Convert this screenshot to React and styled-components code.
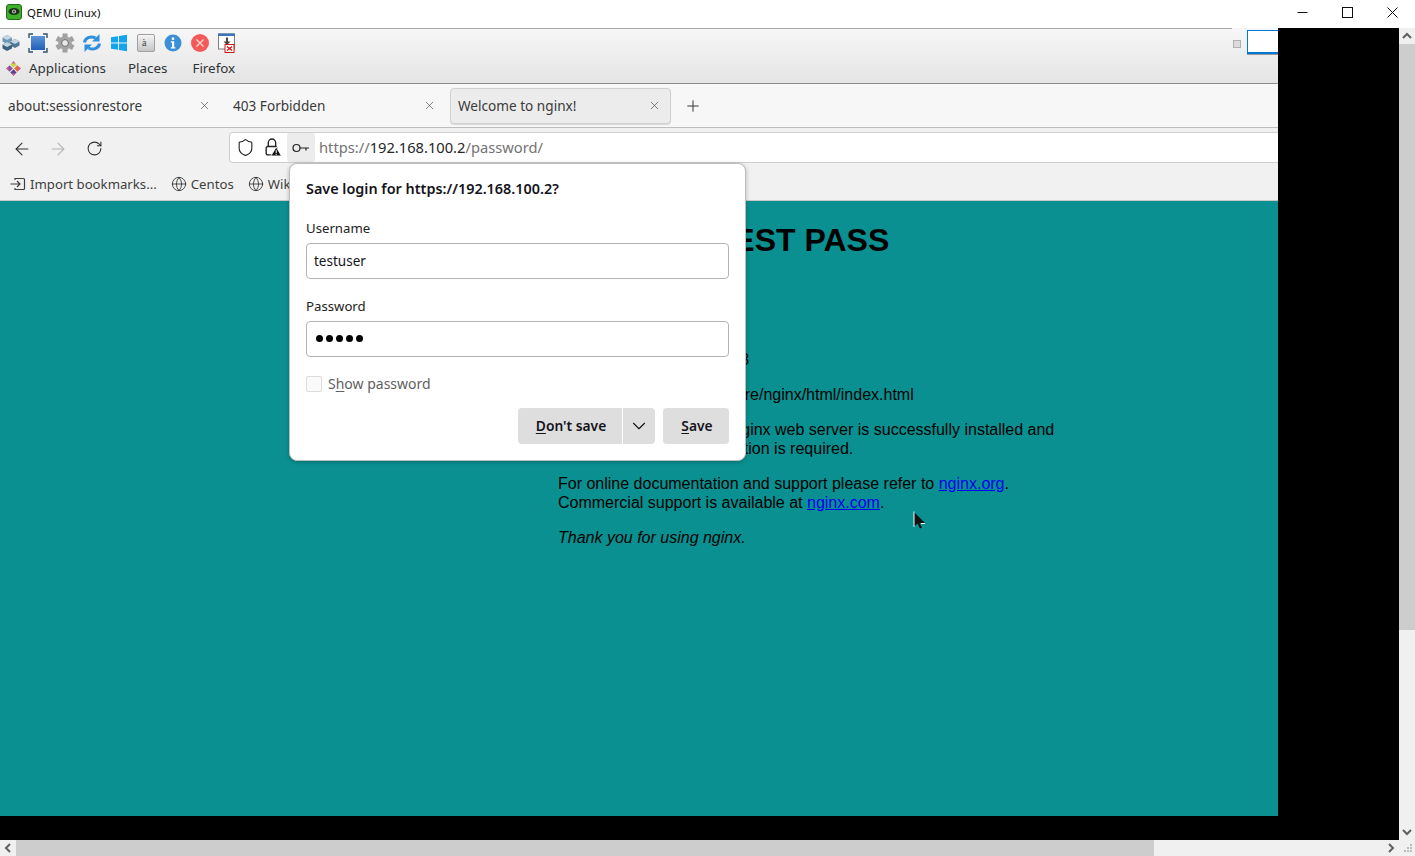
import React from "react";
import styled, { createGlobalStyle } from "styled-components";
import { ArrowLeft, ArrowRight, ChevronDown, Globe, Plus, RotateCw, Shield, X } from "lucide-react";

const GlobalStyle = createGlobalStyle`
  html, body {
    margin: 0;
    padding: 0;
    background: #000;
    overflow: hidden;
  }
  * { box-sizing: border-box; }
`;

const Screen = styled.div`
  width: 1415px;
  height: 856px;
  display: flex;
  flex-direction: column;
  overflow: hidden;
  background: #000;
  font-family: "Noto Sans", "Open Sans", sans-serif;
`;

const TitleBar = styled.div`
  height: 28px;
  flex: none;
  display: flex;
  align-items: center;
  background: #fff;
  padding: 0 0 4px 6px;
  font-size: 11.5px;
  color: #111;
`;

const TitleText = styled.span`
  margin-left: 5px;
  flex: 1;
`;

const WinButton = styled.div`
  width: 45px;
  height: 24px;
  display: flex;
  align-items: center;
  justify-content: center;
`;

const Middle = styled.div`
  flex: 1;
  display: flex;
  min-height: 0;
`;

const Viewport = styled.div`
  flex: 1;
  display: flex;
  flex-direction: column;
  background: #000;
`;

const Guest = styled.div`
  position: relative;
  width: 1278px;
  height: 788px;
  display: flex;
  flex-direction: column;
  overflow: hidden;
  background: #fff;
`;

const DesktopBar = styled.div`
  height: 56px;
  flex: none;
  position: relative;
  background: linear-gradient(#f7f7f7, #e4e4e4);
  border-bottom: 1px solid #8c8c8c;
`;

const TaskTray = styled.div`
  position: absolute;
  top: 2px;
  right: 0;
  display: flex;
  align-items: center;
  gap: 6px;
`;

const TrayDot = styled.div`
  width: 8px;
  height: 8px;
  margin-top: 4px;
  background: #dcdcdc;
  border: 1px solid #b0b0b0;
`;

const TrayInput = styled.div`
  width: 31px;
  height: 24px;
  background: #fff;
  border: 1px solid #0078d7;
  border-right: none;
  border-bottom: 2px solid #0078d7;
  box-shadow: 0 1px 0 #9a9a9a;
`;

const TopRule = styled.div`
  height: 1px;
  width: 1232px;
  background: #a8a8a8;
`;

const IconRow = styled.div`
  display: flex;
  gap: 7px;
  padding: 4px 0 0 1px;
  height: 26px;
`;

const MenuRow = styled.div`
  display: flex;
  align-items: center;
  height: 26px;
  padding-left: 6px;
  font-size: 13.4px;
  color: #2e3436;
`;

const MenuItem = styled.span`
  margin-left: ${(p) => p.$left}px;
`;

const TabBar = styled.div`
  height: 44px;
  flex: none;
  display: flex;
  gap: 4px;
  padding-top: 4px;
  background: #f7f7f7;
  border-bottom: 1px solid #bdbdbd;
`;

const Tab = styled.div`
  width: 221px;
  height: 36px;
  display: flex;
  align-items: center;
  justify-content: space-between;
  padding: 0 9px 1px 7px;
  font-size: 13.6px;
  color: #3a3a3a;
  border-radius: 4px;
  background: ${(p) => (p.$active ? "#ececec" : "transparent")};
  border: 1px solid ${(p) => (p.$active ? "#d0d0d0" : "transparent")};
  box-shadow: ${(p) => (p.$active ? "0 1px 1px rgba(0,0,0,0.12)" : "none")};
`;

const NewTab = styled.div`
  width: 36px;
  height: 36px;
  display: flex;
  align-items: center;
  justify-content: center;
  color: #333;
`;

const NavBar = styled.div`
  height: 37px;
  flex: none;
  display: flex;
  align-items: center;
  background: #f1f1f1;
  padding: 2px 0 0 4px;
`;

const NavButton = styled.div`
  width: 36px;
  height: 30px;
  padding-top: 2px;
  display: flex;
  align-items: center;
  justify-content: center;
  color: ${(p) => (p.$muted ? "#b4b4b4" : "#333")};
`;

const UrlBar = styled.div`
  margin-left: 117px;
  flex: 1;
  height: 31px;
  display: flex;
  align-items: center;
  background: #fff;
  border: 1px solid #cfcfcf;
  border-right: none;
  border-radius: 4px 0 0 4px;
  padding-left: 2px;
  font-size: 14.7px;
  color: #737373;
`;

const UrlIcon = styled.div`
  width: 27px;
  height: 29px;
  flex: none;
  display: flex;
  align-items: center;
  justify-content: center;
  color: #222;
`;

const KeyButton = styled(UrlIcon)`
  width: 28px;
  margin-left: 1px;
  background: #ececec;
  border-radius: 3px;
`;

const UrlText = styled.span`
  margin: -2px 0 0 4px;
`;

const UrlHost = styled.span`
  color: #262626;
`;

const BookmarkBar = styled.div`
  height: 36px;
  flex: none;
  display: flex;
  align-items: center;
  background: #f1f1f1;
  border-bottom: 1px solid #c8c8c8;
  padding: 2px 0 0 10px;
  font-size: 13.2px;
  color: #3f3f3f;
`;

const Bookmark = styled.div`
  display: flex;
  align-items: center;
  gap: 4px;
  margin-right: 14px;
`;

const Page = styled.div`
  flex: 1;
  background: #0a9090;
  color: #000;
  font-family: "Liberation Sans", Arial, sans-serif;
  font-size: 16px;
  line-height: 19px;
`;

const PageBody = styled.div`
  width: 560px;
  margin-left: 558px;
`;

const Heading = styled.h1`
  font-size: 32px;
  line-height: 37px;
  font-weight: bold;
  margin: 21px 0 91px;
`;

const HeadingLead = styled.span`
  margin-right: 7px;
`;

const Para = styled.p`
  margin: 0 0 16px;
  font-style: ${(p) => (p.$italic ? "italic" : "normal")};
`;

const Link = styled.a`
  color: #0000ee;
  text-decoration: underline;
`;

const Pointer = styled.svg`
  position: absolute;
  left: 913px;
  top: 483px;
`;

const Dialog = styled.div`
  position: absolute;
  left: 289px;
  top: 135px;
  width: 457px;
  height: 298px;
  display: flex;
  flex-direction: column;
  padding: 15px 16px 0;
  background: #fff;
  border: 1px solid #bdbdbd;
  border-radius: 8px;
  box-shadow: 0 1px 4px rgba(0, 0, 0, 0.25);
  color: #15141a;
  font-size: 13.5px;
`;

const DialogTitle = styled.div`
  font-weight: 600;
  font-size: 14.4px;
  line-height: 20px;
`;

const FieldLabel = styled.div`
  margin-top: ${(p) => p.$top}px;
  height: 20px;
  line-height: 19px;
  font-size: 13.2px;
  color: #222;
`;

const FieldBox = styled.div`
  height: 36px;
  margin-top: 4px;
  display: flex;
  align-items: center;
  padding: 0 7px 1px;
  border: 1px solid #b4b4b4;
  border-radius: 4px;
`;

const Dots = styled.div`
  display: flex;
  gap: 3px;
  padding-left: 2px;
`;

const Dot = styled.span`
  width: 7px;
  height: 7px;
  border-radius: 50%;
  background: #000;
`;

const ShowRow = styled.div`
  margin-top: 19px;
  height: 16px;
  display: flex;
  align-items: center;
  gap: 6px;
  font-size: 14px;
  color: #5f5f5f;
`;

const ShowLabel = styled.span`
  margin-top: -2px;
`;

const CheckBox = styled.span`
  width: 16px;
  height: 16px;
  background: #fafafa;
  border: 1px solid #dcdcdc;
  border-radius: 2px;
`;

const Buttons = styled.div`
  margin-top: 16px;
  display: flex;
  justify-content: flex-end;
  gap: 8px;
`;

const SplitButton = styled.div`
  display: flex;
  gap: 1px;
`;

const Button = styled.div`
  height: 36px;
  padding: 0 0 ${(p) => p.$bottom || 2}px ${(p) => p.$left || 0}px;
  display: flex;
  align-items: center;
  justify-content: center;
  width: ${(p) => p.$w}px;
  background: #dedede;
  font-size: 13.8px;
  font-weight: 600;
  color: #15141a;
  border-radius: ${(p) => p.$radius || "4px"};
`;

const Access = styled.span`
  text-decoration: underline;
  text-underline-offset: 2px;
`;

const BlackFill = styled.div`
  flex: 1;
`;

const VScroll = styled.div`
  width: 16px;
  flex: none;
  display: flex;
  flex-direction: column;
  background: #f0f0f0;
`;

const VThumb = styled.div`
  height: 586px;
  background: #cdcdcd;
`;

const ArrowCell = styled.div`
  width: 16px;
  height: 16px;
  flex: none;
  display: flex;
  align-items: center;
  justify-content: center;
`;

const Spacer = styled.div`
  flex: 1;
`;

const HScroll = styled.div`
  height: 16px;
  flex: none;
  display: flex;
  background: #f0f0f0;
`;

const HThumb = styled.div`
  width: 1138px;
  background: #cdcdcd;
`;

const Cubes = () => (
  <svg width="20" height="20" viewBox="0 0 20 20">
    <path d="M6 2l5 2.500v4L6 11 1.500 8.500v-4z" fill="#6f97b5" />
    <path d="M14 6l4.500 2.500v4L14 15l-5-2.500v-4z" fill="#4d7794" />
    <path d="M6 9l5 2.500v4L6 18l-4.500-2.500v-4z" fill="#3f627c" />
    <path d="M6 2l5 2.500L6 7 1.500 4.500zM14 6l4.500 2.500L14 11 9 8.500zM6 9l5 2.500L6 14l-4.500-2.500z" fill="#c3d6e3" />
  </svg>
);

const FullScreen = () => (
  <svg width="20" height="20" viewBox="0 0 20 20">
    <defs>
      <linearGradient id="fsBlue" x1="0" y1="0" x2="0" y2="1">
        <stop offset="0" stopColor="#5f95d8" />
        <stop offset="1" stopColor="#1f5fb8" />
      </linearGradient>
    </defs>
    <rect x="3" y="3" width="14" height="14" fill="url(#fsBlue)" />
    <path d="M1 5V1h4M15 1h4v4M19 15v4h-4M5 19H1v-4" fill="none" stroke="#35506b" strokeWidth="1.400" />
  </svg>
);

const Gear = () => (
  <svg width="20" height="20" viewBox="0 0 20 20">
    <g fill="#a0a0a0">
      {[0, 60, 120, 180, 240, 300].map((a) => (
        <rect key={a} x="7.500" y="0.500" width="5" height="5" transform={`rotate(${a} 10 10)`} />
      ))}
    </g>
    <circle cx="10" cy="10" r="6.800" fill="#a4a4a4" />
    <circle cx="10" cy="10" r="3.400" fill="#e9e9e9" stroke="#6d6d6d" />
  </svg>
);

const Refresh = () => (
  <svg width="20" height="20" viewBox="0 0 20 20" fill="none">
    <path d="M2.500 9.500C3 5 8.500 2.500 13.500 5" stroke="#2f8fe0" strokeWidth="3" />
    <path d="M17.500 1v7.500H10z" fill="#2f8fe0" />
    <path d="M17.500 10.500C17 15 11.500 17.500 6.500 15" stroke="#2f8fe0" strokeWidth="3" />
    <path d="M2.500 19v-7.500H10z" fill="#2f8fe0" />
  </svg>
);

const WindowsLogo = () => (
  <svg width="20" height="20" viewBox="0 0 20 20" fill="#12a5ee">
    <path d="M2 4.200l7-1v6.300H2zM10 3l8-1.200v7.700h-8zM2 10.500h7v6.300l-7-1zM10 10.500h8v7.700L10 17z" />
  </svg>
);

const KeyCap = () => (
  <svg width="20" height="20" viewBox="0 0 20 20">
    <defs>
      <linearGradient id="capFill" x1="0" y1="0" x2="0" y2="1">
        <stop offset="0" stopColor="#f6f6f6" />
        <stop offset="1" stopColor="#c4c4c4" />
      </linearGradient>
    </defs>
    <rect x="1.500" y="1.500" width="17" height="17" rx="1.500" fill="url(#capFill)" stroke="#a0a0a0" />
    <text x="6" y="13" fontSize="10" fontFamily="Liberation Serif, serif" fill="#444">à</text>
  </svg>
);

const InfoIcon = () => (
  <svg width="20" height="20" viewBox="0 0 20 20">
    <circle cx="10" cy="10" r="8.500" fill="#3b8fd6" />
    <rect x="8.800" y="4.500" width="2.400" height="2.400" fill="#fff" />
    <path d="M7.800 8.300h3.400v6h1.200v1.300H7.800v-1.300H9V9.600H7.800z" fill="#fff" />
  </svg>
);

const StopIcon = () => (
  <svg width="20" height="20" viewBox="0 0 20 20">
    <circle cx="10" cy="10" r="9" fill="#f25a5a" />
    <path d="M6.500 6.500l7 7M13.500 6.500l-7 7" stroke="#ffd9d9" strokeWidth="1.200" />
  </svg>
);

const SaveWindow = () => (
  <svg width="20" height="20" viewBox="0 0 20 20">
    <rect x="1.500" y="1" width="16" height="15" fill="#fff" stroke="#7d7d7d" />
    <rect x="1" y="0.500" width="17" height="2.500" fill="#3b74b8" />
    <path d="M9 4.500h2v4h2.500L10 12 6.500 8.500H9z" fill="#444" />
    <rect x="8" y="11.500" width="9" height="8" fill="#fff" stroke="#d01818" />
    <path d="M10 13.500l5 4M15 13.500l-5 4" stroke="#d01818" strokeWidth="1.500" />
  </svg>
);

const CentosLogo = () => (
  <svg width="15" height="15" viewBox="0 0 15 15" style={{ marginRight: 8 }}>
    <g transform="rotate(45 7.500 7.500)">
      <rect x="2.500" y="2.500" width="4.500" height="4.500" fill="#c9d44a" />
      <rect x="8" y="2.500" width="4.500" height="4.500" fill="#e0663a" />
      <rect x="2.500" y="8" width="4.500" height="4.500" fill="#8a4e9c" />
      <rect x="8" y="8" width="4.500" height="4.500" fill="#5c3f92" />
    </g>
    <path d="M7.500 0l2 2.500h-4zM15 7.500l-2.500 2v-4zM7.500 15l-2-2.500h4zM0 7.500l2.500-2v4z" fill="#d65ca0" />
  </svg>
);

const QemuIcon = () => (
  <svg width="16" height="16" viewBox="0 0 16 16">
    <rect x="0.500" y="0.500" width="15" height="15" rx="2.500" fill="#3fae2a" stroke="#1f6d14" />
    <ellipse cx="8" cy="7.500" rx="5.500" ry="3.500" fill="#20301f" />
    <circle cx="8" cy="7.500" r="2" fill="#b8c8b4" />
    <circle cx="8" cy="7.500" r="0.900" fill="#20301f" />
  </svg>
);

const LockWarn = () => (
  <svg width="19" height="19" viewBox="0 0 18 18" fill="none">
    <path d="M5 8V4.500a3.500 3.500 0 0 1 7 0V8" stroke="#222" strokeWidth="1.300" />
    <rect x="3" y="8" width="10" height="8" rx="1.500" stroke="#222" strokeWidth="1.300" />
    <path d="M12.500 8.500l5 8.500h-10z" fill="#111" stroke="#fff" strokeWidth="0.800" />
    <rect x="12" y="11.500" width="1" height="2.800" fill="#fff" />
    <rect x="12" y="15" width="1" height="1" fill="#fff" />
  </svg>
);

const KeyIcon = () => (
  <svg width="18" height="10" viewBox="0 0 18 10" fill="none" stroke="#222" strokeWidth="1.200">
    <circle cx="4.500" cy="5" r="3.500" />
    <path d="M8 5h9M14 5v2.500" />
  </svg>
);

const ImportIcon = () => (
  <svg width="16" height="16" viewBox="0 0 16 16" fill="none" stroke="#3f3f3f" strokeWidth="1.200">
    <path d="M5 4V2.500h8.500a1 1 0 0 1 1 1v9a1 1 0 0 1-1 1H5V12" />
    <path d="M0.500 8h9M7 5l3 3-3 3" />
  </svg>
);

const Chevron = ({ points }) => (
  <svg width="10" height="10" viewBox="0 0 10 10" fill="none" stroke="#606060" strokeWidth="2">
    <polyline points={points} />
  </svg>
);

const Grip = () => (
  <svg width="16" height="16" viewBox="0 0 16 16" fill="#bcbcbc">
    <path d="M11 4h2v2h-2zM8 7h2v2H8zM11 7h2v2h-2zM5 10h2v2H5zM8 10h2v2H8zM11 10h2v2h-2z" />
  </svg>
);

export default function App() {
  return (
    <>
      <GlobalStyle />
      <Screen>
        <TitleBar>
          <QemuIcon />
          <TitleText>QEMU (Linux)</TitleText>
          <WinButton>
            <svg width="11" height="11" viewBox="0 0 11 11" stroke="#111"><path d="M0.500 5.500h10" /></svg>
          </WinButton>
          <WinButton>
            <svg width="11" height="11" viewBox="0 0 11 11" fill="none" stroke="#111"><rect x="0.500" y="0.500" width="10" height="10" /></svg>
          </WinButton>
          <WinButton>
            <svg width="11" height="11" viewBox="0 0 11 11" stroke="#111"><path d="M0.500 0.500l10 10M10.500 0.500l-10 10" /></svg>
          </WinButton>
        </TitleBar>
        <Middle>
          <Viewport>
            <Guest>
              <DesktopBar>
                <TopRule />
                <IconRow>
                  <Cubes />
                  <FullScreen />
                  <Gear />
                  <Refresh />
                  <WindowsLogo />
                  <KeyCap />
                  <InfoIcon />
                  <StopIcon />
                  <SaveWindow />
                </IconRow>
                <MenuRow>
                  <CentosLogo />
                  <MenuItem $left={0}>Applications</MenuItem>
                  <MenuItem $left={22}>Places</MenuItem>
                  <MenuItem $left={25}>Firefox</MenuItem>
                </MenuRow>
                <TaskTray>
                  <TrayDot />
                  <TrayInput />
                </TaskTray>
              </DesktopBar>
              <TabBar>
                <Tab>
                  about:sessionrestore
                  <X size={13} strokeWidth={1.2} color="#444" />
                </Tab>
                <Tab>
                  403 Forbidden
                  <X size={13} strokeWidth={1.2} color="#444" />
                </Tab>
                <Tab $active>
                  Welcome to nginx!
                  <X size={13} strokeWidth={1.2} color="#444" />
                </Tab>
                <NewTab>
                  <Plus size={18} strokeWidth={1.3} />
                </NewTab>
              </TabBar>
              <NavBar>
                <NavButton><ArrowLeft size={20} strokeWidth={1.3} /></NavButton>
                <NavButton $muted><ArrowRight size={20} strokeWidth={1.3} /></NavButton>
                <NavButton><RotateCw size={17} strokeWidth={1.5} /></NavButton>
                <UrlBar>
                  <UrlIcon><Shield size={19} strokeWidth={1.4} /></UrlIcon>
                  <UrlIcon><LockWarn /></UrlIcon>
                  <KeyButton><KeyIcon /></KeyButton>
                  <UrlText>
                    https://<UrlHost>192.168.100.2</UrlHost>/password/
                  </UrlText>
                </UrlBar>
              </NavBar>
              <BookmarkBar>
                <Bookmark><ImportIcon />Import bookmarks...</Bookmark>
                <Bookmark><Globe size={16} strokeWidth={1.3} color="#333" />Centos</Bookmark>
                <Bookmark><Globe size={16} strokeWidth={1.3} color="#333" />Wiki</Bookmark>
              </BookmarkBar>
              <Page>
                <PageBody>
                  <Heading><HeadingLead>Welcome</HeadingLead> TEST PASS</Heading>
                  <Para>Server ip is: 192.168.100.3</Para>
                  <Para>Document root is: /usr/share/nginx/html/index.html</Para>
                  <Para>
                    If you see this page, the nginx web server is successfully installed and
                    working. Further configuration is required.
                  </Para>
                  <Para>
                    For online documentation and support please refer to <Link href="#">nginx.org</Link>.
                    <br />
                    Commercial support is available at <Link href="#">nginx.com</Link>.
                  </Para>
                  <Para $italic>Thank you for using nginx.</Para>
                </PageBody>
              </Page>
              <Dialog>
                <DialogTitle>Save login for https://192.168.100.2?</DialogTitle>
                <FieldLabel $top={20}>Username</FieldLabel>
                <FieldBox>testuser</FieldBox>
                <FieldLabel $top={18}>Password</FieldLabel>
                <FieldBox>
                  <Dots>
                    <Dot /><Dot /><Dot /><Dot /><Dot />
                  </Dots>
                </FieldBox>
                <ShowRow>
                  <CheckBox />
                  <ShowLabel>S<Access>h</Access>ow password</ShowLabel>
                </ShowRow>
                <Buttons>
                  <SplitButton>
                    <Button $w={104} $left={2} $radius="4px 0 0 4px"><span><Access>D</Access>on't save</span></Button>
                    <Button $w={32} $bottom={1} $radius="0 4px 4px 0"><ChevronDown size={22} strokeWidth={1.2} /></Button>
                  </SplitButton>
                  <Button $w={66} $left={2}><span><Access>S</Access>ave</span></Button>
                </Buttons>
              </Dialog>
              <Pointer width="14" height="18" viewBox="0 0 14 18">
                <path d="M1 1v14.500l3.500-3 2.500 5 2-1-2.500-4.500H12z" fill="#111" />
                <path d="M1 0.500V16M8 12.500h4" stroke="#fff" fill="none" />
              </Pointer>
            </Guest>
            <BlackFill />
          </Viewport>
          <VScroll>
            <ArrowCell><Chevron points="1,7 5,3 9,7" /></ArrowCell>
            <VThumb />
            <Spacer />
            <ArrowCell><Chevron points="1,3 5,7 9,3" /></ArrowCell>
          </VScroll>
        </Middle>
        <HScroll>
          <ArrowCell><Chevron points="7,1 3,5 7,9" /></ArrowCell>
          <HThumb />
          <Spacer />
          <ArrowCell><Chevron points="3,1 7,5 3,9" /></ArrowCell>
          <Grip />
        </HScroll>
      </Screen>
    </>
  );
}
